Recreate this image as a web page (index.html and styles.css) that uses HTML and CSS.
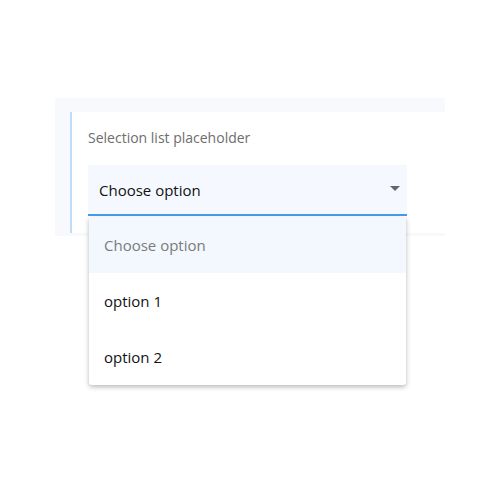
FILE: index.html
```html
<!DOCTYPE html>
<html>
<head>
<meta charset="utf-8">
<link rel="stylesheet" href="styles.css">
</head>
<body>
<div class="page">
  <div class="panel">
    <div class="field">
      <div class="label">Selection list placeholder</div>
      <div class="select">
        <span class="value">Choose option</span>
        <span class="arrow"></span>
        <ul class="menu">
          <li class="item placeholder">Choose option</li>
          <li class="item">option 1</li>
          <li class="item">option 2</li>
        </ul>
      </div>
    </div>
  </div>
</div>
</body>
</html>
```
FILE: styles.css
```css
html, body {
  margin: 0;
  background: #ffffff;
  font-family: "Open Sans", "Noto Sans", sans-serif;
}
body {
  min-height: 500px;
}
.page {
  padding: 98px 0 0 55px;
  width: 390px;
}
.panel {
  background: #f7f9fc;
  padding: 14px 0 3px 15px;
}
.field {
  background: #ffffff;
  border-left: 2px solid #bbdefb;
  padding: 16px 0 17px 16px;
}
.label {
  font-size: 14px;
  line-height: 20px;
  color: #6d6d6d;
  margin-bottom: 17px;
}
.select {
  position: relative;
  width: 319px;
  height: 51px;
  box-sizing: border-box;
  background: #f5f9ff;
  border-bottom: 2px solid #4a9be6;
  display: flex;
  align-items: center;
  justify-content: space-between;
  padding: 0 7px 0 11px;
}
.value {
  font-size: 15px;
  color: #111;
}
.arrow {
  width: 0;
  height: 0;
  border-left: 5px solid transparent;
  border-right: 5px solid transparent;
  border-top: 5px solid #666;
  margin-top: -2px;
}
.menu {
  position: absolute;
  top: calc(100% + 3px);
  left: 1px;
  width: 317px;
  margin: 0;
  padding: 0;
  list-style: none;
  background: #ffffff;
  border-radius: 0 0 3px 3px;
  box-shadow: 0 2px 5px rgba(0, 0, 0, 0.28);
  overflow: hidden;
  z-index: 2;
}
.item {
  height: 56px;
  line-height: 56px;
  padding-left: 15px;
  font-size: 15px;
  color: #111;
}
.item.placeholder {
  background: #f3f8ff;
  color: #7a7a7a;
}
```
